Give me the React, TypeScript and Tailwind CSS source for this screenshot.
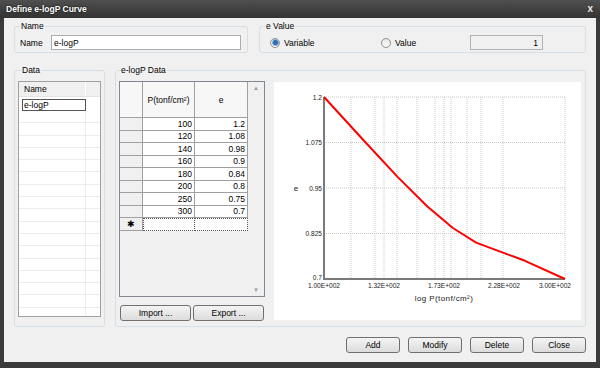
import { FC, ReactNode } from 'react';

const rows: [number, number][] = [
    [100, 1.2], [120, 1.08], [140, 0.98], [160, 0.9],
    [180, 0.84], [200, 0.8], [250, 0.75], [300, 0.7],
];

const Btn: FC<{ children: ReactNode; className?: string }> = ({ children, className }) => (
    <button className={`h-[16px] rounded-[3px] border border-[#707070] bg-linear-to-b from-[#f4f4f4] to-[#dcdcdc] text-[8.5px] leading-[12px] text-black ${className ?? ''}`}>
        {children}
    </button>
);

const Radio: FC<{ checked?: boolean }> = ({ checked }) => (
    <span className="flex h-[10px] w-[10px] items-center justify-center rounded-full border border-[#8e8f8f] bg-linear-to-b from-[#e6e6e6] to-[#fdfdfd]">
        {checked && <span className="h-[5px] w-[5px] rounded-full bg-[#2b6fb5] ring-1 ring-[#8fb2d8]" />}
    </span>
);

// log scale chart, 100..300
const Chart: FC = () => {
    const L = 50, T = 15, R = 291, B = 197;
    const px = (p: number) => L + (R - L) * Math.log(p / 100) / Math.log(3);
    const py = (e: number) => T + (1.2 - e) * (B - T) / 0.5;
    const pts = rows.map(([p, e]) => `${px(p).toFixed(1)},${py(e).toFixed(1)}`).join(' ');
    const vx = [77, 101, 110, 123, 143, 161, 170, 177, 193, 207, 229, 291];
    const hy = [15, 60.5, 106, 151.5];
    const yl: [string, number][] = [['1.2', 15], ['1.075', 60.5], ['0.95', 106], ['0.825', 151.5], ['0.7', 195]];
    const xl: [string, number, 'middle' | 'end'][] = [
        ['1.00E+002', 50, 'middle'], ['1.32E+002', 110, 'middle'], ['1.73E+002', 170, 'middle'],
        ['2.28E+002', 230, 'middle'], ['3.00E+002', 297, 'end'],
    ];
    return (
        <svg width="307" height="238" className="block">
            {vx.map(x => <line key={x} x1={x} y1={T} x2={x} y2={B} stroke="#c9c9c9" strokeDasharray="1 1" />)}
            {hy.map(y => <line key={y} x1={L} y1={y} x2={R} y2={y} stroke="#c9c9c9" strokeDasharray="1 1" />)}
            <line x1={L} y1={T} x2={L} y2={B + 1} stroke="#7a7a7a" strokeWidth="2" />
            <line x1={L} y1={B} x2={R} y2={B} stroke="#7a7a7a" strokeWidth="2" />
            <polyline points={pts} fill="none" stroke="#ff0000" strokeWidth="2" strokeLinejoin="round" />
            <g fontSize="6.6" fill="#222" fontFamily="'Liberation Sans', Arial, sans-serif">
                {yl.map(([t, y]) => <text key={t} x={L - 2} y={y + 2.5} textAnchor="end">{t}</text>)}
                {xl.map(([t, x, a]) => <text key={t} x={x} y={B + 9} textAnchor={a}>{t}</text>)}
                <text x="22" y="109" fontSize="8" textAnchor="middle">e</text>
                <text x="170" y="219" fontSize="8" textAnchor="middle" letterSpacing="0.4">log P(tonf/cm²)</text>
            </g>
        </svg>
    );
};

const App: FC = () => {
    return (
        <div className="flex h-[368px] w-[600px] flex-col bg-[#3a3a3a] font-['Liberation_Sans',Arial,sans-serif] text-[8.5px] leading-[10px] text-black">
            {/* title bar */}
            <div className="flex h-[18px] shrink-0 items-center bg-linear-to-b from-[#505050] to-[#333333] pl-[6px] pr-[7px]">
                <span className="font-bold text-white [text-shadow:0_0_2px_#000]">Define e-logP Curve</span>
                <span className="ml-auto text-[10px] font-bold text-[#e8e8e8]">x</span>
            </div>

            <div className="mx-[4px] mb-[6px] flex flex-1 flex-col bg-[#f0f0f0] px-[10px] pt-[3px]">
                {/* top groups */}
                <div className="flex gap-[11px]">
                    <fieldset className="box-border h-[32px] w-[234px] rounded-[3px] border border-[#d5dfe5] pl-[5px]">
                        <legend className="px-[1px] leading-[10px]">Name</legend>
                        <div className="mt-[4px] flex items-center">
                            <span className="w-[31px]">Name</span>
                            <input className="h-[15px] w-[190px] border border-[#abadb3] bg-white px-[2px] text-[8.5px] outline-none" defaultValue="e-logP" />
                        </div>
                    </fieldset>
                    <fieldset className="box-border h-[32px] flex-1 rounded-[3px] border border-[#d5dfe5] pl-[5px]">
                        <legend className="px-[1px] leading-[10px]">e Value</legend>
                        <div className="mt-[4px] flex items-center pl-[5px]">
                            <div className="flex w-[111px] items-center gap-[4px]"><Radio checked /><span>Variable</span></div>
                            <div className="flex w-[89px] items-center gap-[4px]"><Radio /><span>Value</span></div>
                            <div className="flex h-[15px] w-[73px] items-center justify-end border border-[#adb2b5] bg-[#f0f0f0] pr-[4px]">1</div>
                        </div>
                    </fieldset>
                </div>

                {/* data groups */}
                <div className="mt-[12px] flex gap-[10px]">
                    <fieldset className="box-border h-[262px] w-[91px] rounded-[3px] border border-[#d5dfe5] px-[3px]">
                        <legend className="ml-[3px] px-[1px] leading-[10px]">Data</legend>
                        <div className="mt-[6px] flex h-[236px] flex-col overflow-hidden border border-[#a0a0a0] bg-white">
                            <div className="flex h-[15px] shrink-0 border-b border-[#e3e3e3] bg-[#f0f0f0]">
                                <div className="flex w-[67px] items-center border-r border-white pl-[5px]">Name</div>
                            </div>
                            <div className="flex h-[14px] shrink-0 items-center pt-[1px]">
                                <div className="ml-[3px] flex h-[12px] w-[64px] items-center border border-[#555] pl-[1px]">e-logP</div>
                            </div>
                            {Array.from({ length: 17 }).map((_, i) => (
                                <div key={i} className="flex h-[12.3px] shrink-0 border-b border-[#ececec]">
                                    <div className="w-[67px] border-r border-[#ececec]" />
                                </div>
                            ))}
                        </div>
                    </fieldset>

                    <fieldset className="box-border h-[262px] flex-1 rounded-[3px] border border-[#d5dfe5] pl-[3px]">
                        <legend className="ml-[1px] px-[1px] leading-[10px]">e-logP Data</legend>
                        <div className="mt-[6px] flex gap-[9px]">
                            <div className="flex w-[146px] flex-col">
                                <div className="flex h-[216px] border border-[#828790] bg-[#f0f0f0]">
                                    <div className="flex flex-1 flex-col">
                                        <div className="flex h-[36px] bg-[#f7f7f7]">
                                            <div className="w-[23px] border-r border-b border-[#a0a0a0]" />
                                            <div className="flex w-[52px] items-center justify-center border-r border-b border-[#a0a0a0]">P(tonf/cm²)</div>
                                            <div className="flex w-[53px] items-center justify-center border-r border-b border-[#a0a0a0]">e</div>
                                        </div>
                                        {rows.map(([p, e]) => (
                                            <div key={p} className="flex h-[12.5px]">
                                                <div className="w-[23px] border-r border-b border-[#a0a0a0] bg-[#f0f0f0]" />
                                                <div className="flex w-[52px] items-center justify-end border-r border-b border-[#a0a0a0] bg-white pr-[2px]">{p}</div>
                                                <div className="flex w-[53px] items-center justify-end border-r border-b border-[#a0a0a0] bg-white pr-[2px]">{String(e)}</div>
                                            </div>
                                        ))}
                                        <div className="flex h-[12.5px]">
                                            <div className="flex w-[23px] items-center justify-center border-r border-b border-[#a0a0a0] bg-[#f0f0f0] text-[9px] leading-[10px]">✱</div>
                                            <div className="w-[52px] border border-dotted border-[#555] bg-white" />
                                            <div className="w-[53px] border-y border-r border-dotted border-[#555] bg-white" />
                                        </div>
                                    </div>
                                    <div className="flex w-[16px] flex-col items-center justify-between bg-[#f0f0f0] py-[2px] text-[6px] leading-[8px] text-[#9a9a9a]">
                                        <span>▲</span>
                                        <span>▼</span>
                                    </div>
                                </div>
                                <div className="mt-[8px] flex gap-[2px] pl-[1px]">
                                    <Btn className="w-[71px]">Import ...</Btn>
                                    <Btn className="w-[71px]">Export ...</Btn>
                                </div>
                            </div>
                            <div className="mt-[1px] h-[238px] w-[307px] bg-white">
                                <Chart />
                            </div>
                        </div>
                    </fieldset>
                </div>

                {/* buttons */}
                <div className="mt-[10px] flex justify-end gap-[8px]">
                    <Btn className="w-[54px]">Add</Btn>
                    <Btn className="w-[54px]">Modify</Btn>
                    <Btn className="w-[54px]">Delete</Btn>
                    <Btn className="w-[54px]">Close</Btn>
                </div>
            </div>
        </div>
    );
};

export default App;
